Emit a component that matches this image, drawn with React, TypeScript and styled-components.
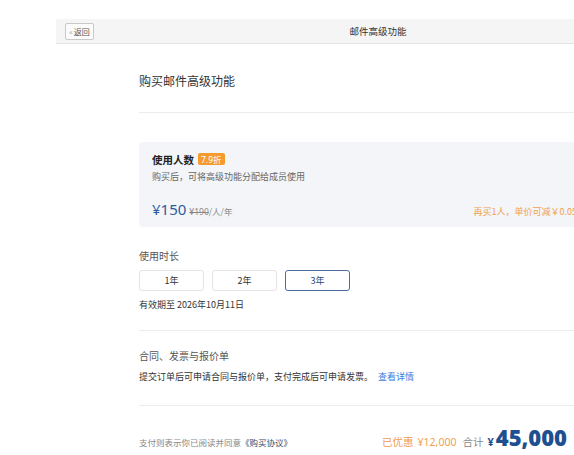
import React, { useState } from 'react';
import styled, { createGlobalStyle } from 'styled-components';

const GlobalStyle = createGlobalStyle`
  html, body {
    margin: 0;
    padding: 0;
    background: #ffffff;
    overflow: hidden;
  }
  body {
    font-family: "Noto Sans", "Noto Sans CJK SC", sans-serif;
    color: #333;
  }
`;

const Page = styled.div`
  padding: 19px 0 0 56px;
  width: 700px;
`;

const TopBar = styled.div`
  display: flex;
  align-items: center;
  width: 638px;
  height: 24px;
  background: #f5f5f5;
  border-bottom: 1px solid #e3e3e3;
`;

const BackButton = styled.button`
  display: flex;
  align-items: center;
  gap: 1px;
  margin-left: 9px;
  height: 17px;
  padding: 0 3px;
  background: #fbfbfb;
  border: 1px solid #c9c9c9;
  border-radius: 2px;
  font-family: "Noto Sans CJK SC", sans-serif;
  font-size: 8px;
  color: #555;
  cursor: pointer;

  & > span {
    color: #aaa;
  }
`;

const BarTitle = styled.div`
  flex: 1;
  text-align: center;
  margin-right: 32px;
  font-family: "Noto Sans CJK SC", sans-serif;
  font-size: 9.5px;
  color: #333;
`;

const Content = styled.div`
  width: 452px;
  margin-left: 83px;
  font-family: "Noto Sans CJK SC", sans-serif;
`;

const PageTitle = styled.h1`
  margin: 28px 0 0;
  font-size: 12px;
  line-height: 18px;
  font-weight: 400;
  color: #333;
`;

const Divider = styled.div<{ $top: number }>`
  margin-top: ${(p) => p.$top}px;
  height: 1px;
  background: #ececec;
`;

const Card = styled.div`
  margin-top: 29px;
  height: 85px;
  box-sizing: border-box;
  padding: 9px 14px 0 13px;
  background: #f3f5f8;
  border-radius: 4px;
`;

const CardHead = styled.div`
  display: flex;
  align-items: center;
  gap: 4px;
  height: 16px;
`;

const CardTitle = styled.div`
  font-size: 10.5px;
  font-weight: 700;
  color: #222;
`;

const Badge = styled.span`
  display: inline-flex;
  align-items: center;
  height: 12px;
  padding: 0 3px;
  background: #f59a2c;
  color: #fff;
  border-radius: 2px;
  font-family: "Noto Sans", "Noto Sans CJK SC", sans-serif;
  font-size: 8.5px;
`;

const SubText = styled.div`
  margin-top: 3px;
  font-size: 9px;
  line-height: 14px;
  color: #666;
`;

const PriceRow = styled.div`
  display: flex;
  align-items: baseline;
  justify-content: space-between;
  margin-top: 15px;
`;

const PriceLeft = styled.div`
  display: flex;
  align-items: baseline;
  gap: 3px;
`;

const Price = styled.span`
  font-family: "Noto Sans", sans-serif;
  font-size: 15px;
  line-height: 20px;
  color: #2c5b9e;
`;

const PriceUnit = styled.span`
  font-size: 8.5px;
  color: #888;

  & > s {
    font-family: "Noto Sans", sans-serif;
  }
`;

const Promo = styled.span`
  font-size: 9px;
  color: #f2a04c;
`;

const Label = styled.div<{ $top: number }>`
  margin-top: ${(p) => p.$top}px;
  font-size: 10px;
  line-height: 14px;
  color: #555;
`;

const Options = styled.div`
  display: flex;
  gap: 8px;
  margin-top: 7px;
`;

const Option = styled.button<{ $active: boolean }>`
  width: 65px;
  height: 21px;
  padding: 0;
  background: #fff;
  border: 1px solid ${(p) => (p.$active ? '#4e6d9c' : '#e4e4e4')};
  border-radius: 3px;
  font-family: "Noto Sans CJK SC", sans-serif;
  font-size: 9px;
  color: ${(p) => (p.$active ? '#2c4a7a' : '#333')};
  cursor: pointer;
`;

const Note = styled.div<{ $top: number }>`
  margin-top: ${(p) => p.$top}px;
  font-size: 9px;
  line-height: 14px;
  color: #333;
`;

const Link = styled.a`
  margin-left: 5px;
  color: #3b7ddd;
  text-decoration: none;
`;

const Footer = styled.div`
  display: flex;
  align-items: baseline;
  justify-content: space-between;
  margin-top: 18px;
  padding-right: 24px;
`;

const Agreement = styled.div`
  font-size: 8.5px;
  color: #888;

  & > a {
    color: #3a4a66;
    text-decoration: none;
  }
`;

const Summary = styled.div`
  display: flex;
  align-items: baseline;
  gap: 4px;
  font-size: 10.5px;
`;

const Saved = styled.span`
  color: #f0a050;

  & > b {
    margin-left: 4px;
    font-family: "Noto Sans", sans-serif;
    font-weight: 400;
  }
`;

const TotalLabel = styled.span`
  margin-left: 2px;
  color: #888;
`;

const Total = styled.span`
  display: inline-flex;
  align-items: baseline;
  gap: 2px;
  border-bottom: 1px dotted #9cc2e8;
  color: #1d4f91;
  font-family: "Noto Sans", sans-serif;
  font-weight: 700;
  line-height: 26px;

  & > small {
    font-size: 11px;
  }

  & > strong {
    font-size: 22px;
  }
`;

const years = ['1年', '2年', '3年'];

export default function App() {
  const [year, setYear] = useState(2);

  return (
    <>
      <GlobalStyle />
      <Page>
        <TopBar>
          <BackButton>
            <span>«</span>返回
          </BackButton>
          <BarTitle>邮件高级功能</BarTitle>
        </TopBar>
        <Content>
          <PageTitle>购买邮件高级功能</PageTitle>
          <Divider $top={22} />
          <Card>
            <CardHead>
              <CardTitle>使用人数</CardTitle>
              <Badge>7.9折</Badge>
            </CardHead>
            <SubText>购买后，可将高级功能分配给成员使用</SubText>
            <PriceRow>
              <PriceLeft>
                <Price>¥150</Price>
                <PriceUnit>
                  <s>¥190</s>/人/年
                </PriceUnit>
              </PriceLeft>
              <Promo>再买1人，单价可减￥0.05</Promo>
            </PriceRow>
          </Card>
          <Label $top={22}>使用时长</Label>
          <Options>
            {years.map((y, i) => (
              <Option key={y} $active={i === year} onClick={() => setYear(i)}>
                {y}
              </Option>
            ))}
          </Options>
          <Note $top={7}>有效期至 2026年10月11日</Note>
          <Divider $top={18} />
          <Label $top={18}>合同、发票与报价单</Label>
          <Note $top={7}>
            提交订单后可申请合同与报价单，支付完成后可申请发票。
            <Link href="#">查看详情</Link>
          </Note>
          <Divider $top={21} />
          <Footer>
            <Agreement>
              支付则表示你已阅读并同意<a href="#">《购买协议》</a>
            </Agreement>
            <Summary>
              <Saved>
                已优惠<b>¥12,000</b>
              </Saved>
              <TotalLabel>合计</TotalLabel>
              <Total>
                <small>¥</small>
                <strong>45,000</strong>
              </Total>
            </Summary>
          </Footer>
        </Content>
      </Page>
    </>
  );
}
